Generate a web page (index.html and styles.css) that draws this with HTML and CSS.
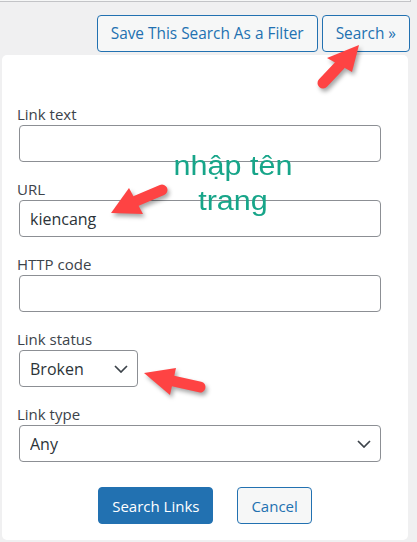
FILE: index.html
```html
<!DOCTYPE html>
<html lang="vi">
<head>
<meta charset="utf-8">
<title>Search Links</title>
<link rel="stylesheet" href="styles.css">
</head>
<body>
<div class="topbox"></div>
<div class="actions">
  <button class="btn btn-secondary btn-top" type="button">Save This Search As a Filter</button>
  <button class="btn btn-secondary btn-top" type="button">Search »</button>
</div>
<form class="panel">
  <div class="fields">
    <div class="field">
      <label class="label" for="f-text">Link text</label>
      <input class="control" id="f-text" type="text" value="">
    </div>
    <div class="field">
      <label class="label" for="f-url">URL</label>
      <input class="control" id="f-url" type="text" value="kiencang">
    </div>
    <div class="field">
      <label class="label" for="f-code">HTTP code</label>
      <input class="control" id="f-code" type="text" value="">
    </div>
    <div class="field">
      <label class="label" for="f-status">Link status</label>
      <div class="select-wrap select-small">
        <select class="control select" id="f-status"><option>Broken</option></select>
        <svg class="chev" width="14" height="8" viewBox="0 0 14 8"><path d="M1 1 L7 7 L13 1" fill="none" stroke="#3c434a" stroke-width="1.7"/></svg>
      </div>
    </div>
    <div class="field">
      <label class="label" for="f-type">Link type</label>
      <div class="select-wrap">
        <select class="control select" id="f-type"><option>Any</option></select>
        <svg class="chev" width="14" height="8" viewBox="0 0 14 8"><path d="M1 1 L7 7 L13 1" fill="none" stroke="#3c434a" stroke-width="1.7"/></svg>
      </div>
    </div>
  </div>
  <div class="form-actions">
    <button class="btn btn-primary" type="button">Search Links</button>
    <button class="btn btn-secondary" type="button">Cancel</button>
  </div>
</form>

<div class="note">nhập tên<br>trang</div>
<svg class="arrows" width="417" height="542" viewBox="0 0 417 542">
  <g class="arrow-g">
    <line x1="323" y1="83" x2="340" y2="65" stroke="#fe4343" stroke-width="11" stroke-linecap="round"/>
    <polygon points="359,45 327,58 352,72" fill="#fe4343"/>
    <line x1="162" y1="190" x2="136" y2="201" stroke="#fe4343" stroke-width="11" stroke-linecap="round"/>
    <polygon points="111,213 129,188 143,214" fill="#fe4343"/>
    <line x1="200" y1="387" x2="173" y2="381" stroke="#fe4343" stroke-width="11" stroke-linecap="round"/>
    <polygon points="144,373 176,368 170,395" fill="#fe4343"/>
  </g>
</svg>
</body>
</html>
```
FILE: styles.css
```css
html, body {
  margin: 0;
  padding: 0;
}
body {
  background: #f0f0f1;
  font-family: "Open Sans", "Noto Sans", sans-serif;
  color: #3c434a;
  width: 417px;
  height: 542px;
  overflow: hidden;
  position: relative;
}
.topbox {
  height: 1px;
  width: 410px;
  background: #f6f7f7;
  border-bottom: 1px solid #c3c4c7;
  border-right: 1px solid #c3c4c7;
}
.actions {
  display: flex;
  justify-content: flex-end;
  gap: 4px;
  margin-top: 13px;
  padding-right: 7px;
}
.btn {
  font-family: "Open Sans", "Noto Sans", sans-serif;
  font-size: 15px;
  line-height: 20px;
  height: 37px;
  padding: 0 13px;
  border-radius: 4px;
  border: 1px solid #2271b1;
  cursor: pointer;
  box-sizing: border-box;
}
.btn-top {
  font-size: 15.4px;
}
.btn-secondary {
  background: #f6f7f7;
  color: #2271b1;
}
.btn-primary {
  background: #2271b1;
  color: #fff;
}
.panel {
  margin: 3px 9px 0 2px;
  background: #fff;
  border-radius: 5px;
  padding: 49px 0 16px 0;
}
.fields {
  padding-left: 17px;
}
.field {
  margin-bottom: 17px;
}
.label {
  display: block;
  font-size: 15px;
  line-height: 20px;
  margin: 0 0 1px -2px;
  color: #3c434a;
}
.control {
  display: block;
  box-sizing: border-box;
  width: 362px;
  height: 37px;
  margin: 0;
  padding: 0 10px;
  border: 1px solid #8c8f94;
  border-radius: 4px;
  background: #fff;
  font-family: "Open Sans", "Noto Sans", sans-serif;
  font-size: 16px;
  color: #2c3338;
  outline: none;
}
.select {
  -webkit-appearance: none;
  appearance: none;
  padding-right: 30px;
}
.select-wrap {
  position: relative;
  width: 362px;
}
.select-small,
.select-small .control {
  width: 119px;
}
.chev {
  position: absolute;
  right: 10px;
  top: 15px;
  pointer-events: none;
}
.form-actions {
  display: flex;
  justify-content: center;
  gap: 24px;
  margin-top: 25px;
}
.note {
  position: absolute;
  left: 160px;
  top: 149px;
  width: 146px;
  text-align: center;
  font-family: "Liberation Sans", Arial, sans-serif;
  font-size: 27px;
  line-height: 35px;
  color: #17a589;
  transform: scaleX(1.13);
  transform-origin: center;
  pointer-events: none;
}
.arrows {
  position: absolute;
  left: 0;
  top: 0;
  pointer-events: none;
}
.arrow-g {
  filter: drop-shadow(2px 3px 2px rgba(0, 0, 0, 0.35));
}
```
